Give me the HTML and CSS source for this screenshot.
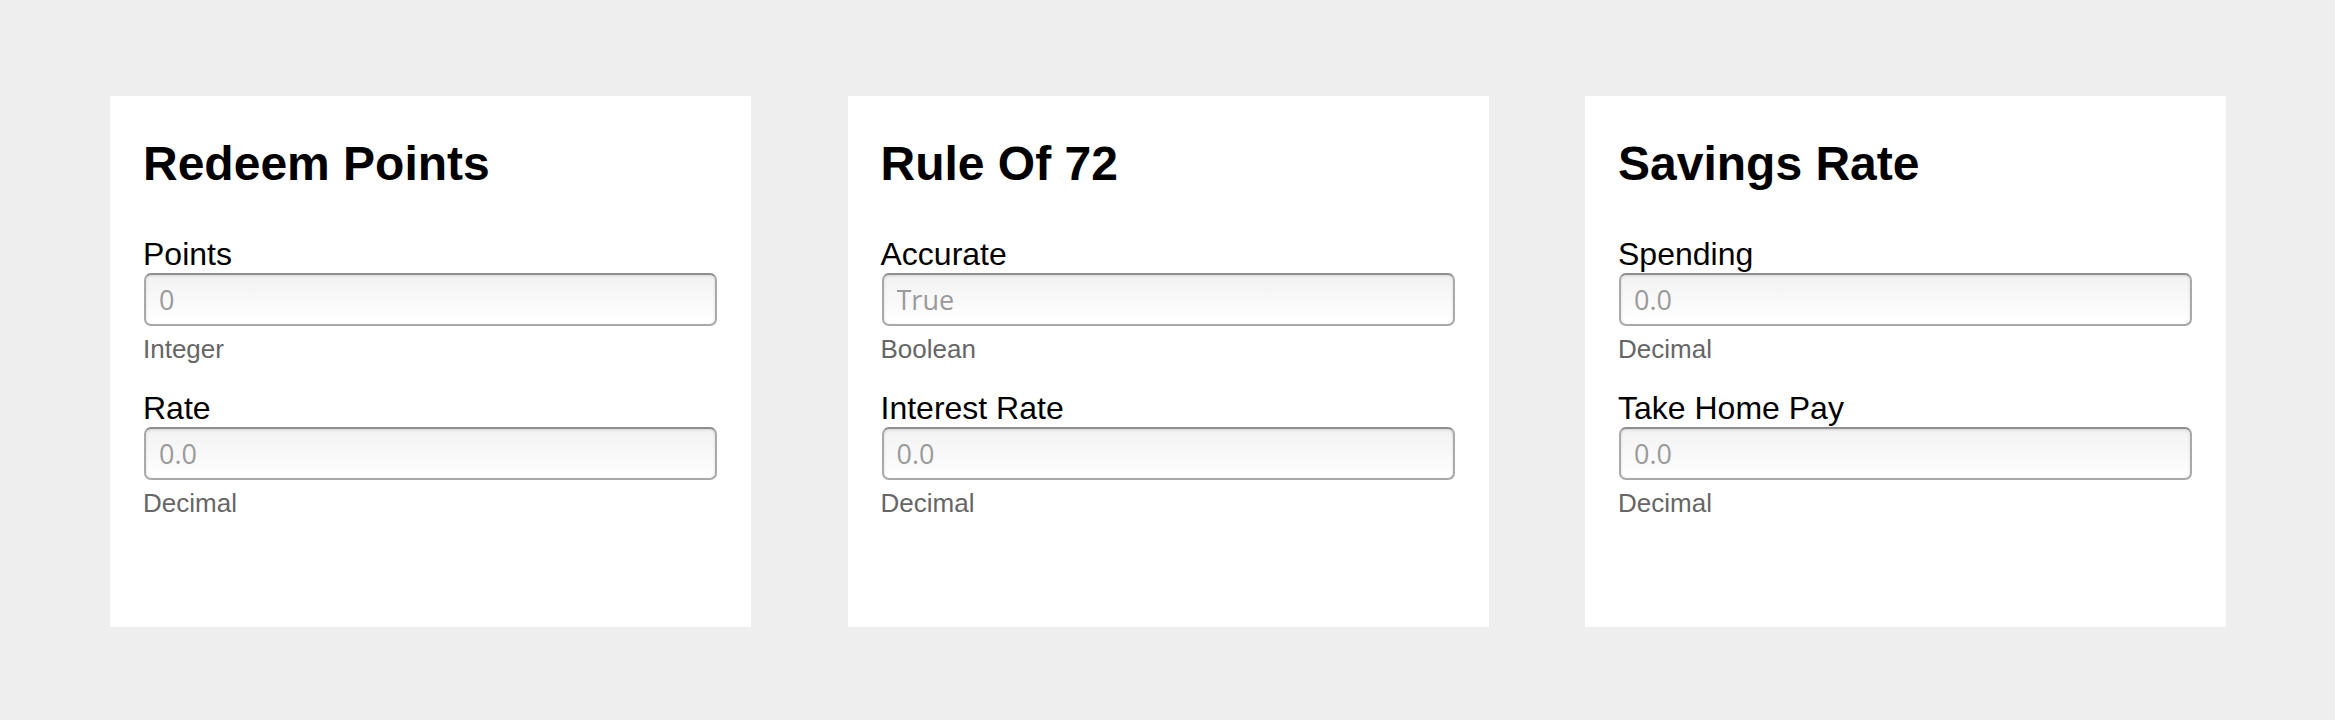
FILE: index.html
```html
<!DOCTYPE html>
<html>
<head>
<meta charset="utf-8">
<link rel="stylesheet" href="styles.css">
</head>
<body>
<main class="grid">
  <section class="card">
    <h1 class="card-title">Redeem Points</h1>
    <div class="field">
      <label class="field-label">Points</label>
      <input class="field-input" type="text" placeholder="0">
      <div class="field-help">Integer</div>
    </div>
    <div class="field">
      <label class="field-label">Rate</label>
      <input class="field-input" type="text" placeholder="0.0">
      <div class="field-help">Decimal</div>
    </div>
  </section>
  <section class="card">
    <h1 class="card-title">Rule Of 72</h1>
    <div class="field">
      <label class="field-label">Accurate</label>
      <input class="field-input" type="text" placeholder="True">
      <div class="field-help">Boolean</div>
    </div>
    <div class="field">
      <label class="field-label">Interest Rate</label>
      <input class="field-input" type="text" placeholder="0.0">
      <div class="field-help">Decimal</div>
    </div>
  </section>
  <section class="card">
    <h1 class="card-title">Savings Rate</h1>
    <div class="field">
      <label class="field-label">Spending</label>
      <input class="field-input" type="text" placeholder="0.0">
      <div class="field-help">Decimal</div>
    </div>
    <div class="field">
      <label class="field-label">Take Home Pay</label>
      <input class="field-input" type="text" placeholder="0.0">
      <div class="field-help">Decimal</div>
    </div>
  </section>
</main>
</body>
</html>
```
FILE: styles.css
```css
html, body {
  margin: 0;
  padding: 0;
  background: #eeeeee;
  font-family: "Liberation Sans", Arial, sans-serif;
  color: #000;
}

.grid {
  display: grid;
  grid-template-columns: repeat(3, 1fr);
  column-gap: 96.5px;
  padding: 96px 109px 0 110px;
}

.card {
  background: #fff;
  height: 531px;
  box-sizing: border-box;
  padding: 33px 34px 0 33px;
  display: flex;
  flex-direction: column;
}

.card-title {
  margin: 7px 0 42px 0;
  font-size: 48px;
  line-height: 56px;
  font-weight: bold;
}

.field {
  display: flex;
  flex-direction: column;
  margin-bottom: 24px;
}

.field-label {
  padding-top: 2px;
  font-size: 32px;
  line-height: 36px;
}

.field-input {
  margin: 1px 0 0 1px;
  height: 53px;
  box-sizing: border-box;
  border: 2px solid #a9a9a9;
  border-top-color: #8f8f8f;
  border-radius: 7px;
  background: linear-gradient(#f2f2f2, #ffffff);
  box-shadow: inset 0 1px 3px rgba(0, 0, 0, 0.12);
  padding: 0 13px;
  font-family: "Open Sans", "Liberation Sans", sans-serif;
  font-size: 27px;
  color: #333;
  outline: none;
}

.field-input::placeholder {
  color: #9a9a9a;
}

.field-help {
  margin-top: 8px;
  font-size: 26px;
  line-height: 30px;
  color: #666;
}
```
